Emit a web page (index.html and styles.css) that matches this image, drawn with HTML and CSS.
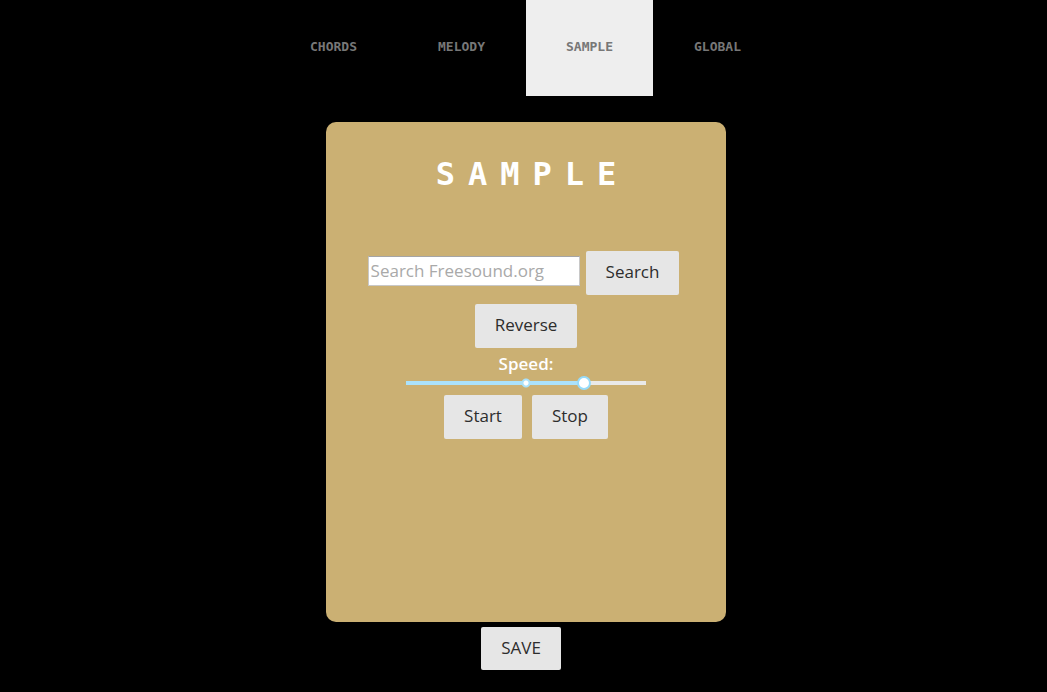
FILE: index.html
```html
<!DOCTYPE html>
<html lang="en">
<head>
<meta charset="utf-8">
<meta name="viewport" content="width=device-width, initial-scale=1">
<title>Sample</title>
<link rel="stylesheet" href="styles.css">
</head>
<body>
<nav class="tabs" aria-label="Sections">
  <a class="tab" href="#chords">CHORDS</a>
  <a class="tab" href="#melody">MELODY</a>
  <a class="tab tab-active" href="#sample" aria-current="page">SAMPLE</a>
  <a class="tab" href="#global">GLOBAL</a>
</nav>
<main class="page">
  <section class="panel" id="sample">
    <h1 class="title">SAMPLE</h1>
    <form class="row search">
      <input class="search-input" type="text" placeholder="Search Freesound.org" aria-label="Search Freesound.org">
      <button class="button" type="submit">Search</button>
    </form>
    <button class="button" type="button">Reverse</button>
    <label class="speed-label" for="speed">Speed:</label>
    <input class="speed" id="speed" type="range" min="0" max="1000" value="757">
    <div class="row transport">
      <button class="button" type="button">Start</button>
      <button class="button" type="button">Stop</button>
    </div>
  </section>
  <button class="button save" type="button">SAVE</button>
</main>
</body>
</html>
```
FILE: styles.css
```css
* {
  box-sizing: border-box;
}

body {
  margin: 0;
  background: #000;
  font-family: "Open Sans", "Noto Sans", sans-serif;
  font-size: 18px;
}

.tabs {
  display: flex;
  justify-content: center;
  gap: 1px;
  padding-left: 4px;
}

.tab {
  width: 127px;
  padding: 35px 0 37px;
  color: #777;
  font: bold 13px/24px "DejaVu Sans Mono", monospace;
  text-align: center;
  text-decoration: none;
}

.tab-active {
  background: #eee;
}

.page {
  display: flex;
  flex-direction: column;
  align-items: center;
  gap: 5px;
  padding: 26px 0 22px 5px;
}

.panel {
  display: flex;
  flex-direction: column;
  align-items: center;
  width: 100%;
  max-width: 400px;
  min-height: 500px;
  padding: 32px 40px;
  border-radius: 10px;
  background: #cbb073;
}

.title {
  margin: 0 0 57px;
  padding-left: 13px;
  color: #fff;
  font: bold 32px/40px "DejaVu Sans Mono", monospace;
  letter-spacing: 13px;
}

.row {
  display: flex;
  align-items: center;
}

.search {
  gap: 6px;
  margin: 0 5px 9px 0;
}

.search-input {
  width: 212px;
  height: 30px;
  margin-bottom: 4px;
  padding: 0 2px 2px;
  border: 1px solid #c8c8c8;
  border-top-color: #a5a5a5;
  border-radius: 0;
  background: #fff;
  font: 500 17px/24px "Open Sans", "Noto Sans", sans-serif;
}

.search-input::placeholder {
  color: #a9a9a9;
  opacity: 1;
}

.button {
  height: 44px;
  padding: 0 20px 2px;
  border: 0;
  border-radius: 2px;
  background: #e6e6e6;
  color: #2d2d2d;
  font: 17px/24px "Open Sans", "Noto Sans", sans-serif;
}

.speed-label {
  margin-top: 3px;
  color: #fff;
  font-size: 17px;
  font-weight: 600;
  line-height: 25px;
}

.speed {
  appearance: none;
  width: 240px;
  height: 14px;
  margin: 0 0 5px;
  background:
    radial-gradient(circle, #fff 2px, #abe2fb 3px, #abe2fb 4px, transparent 5px) center / 10px 10px no-repeat,
    linear-gradient(to right, #abe2fb 74%, #e9e9e9 74%) center / 100% 4px no-repeat;
}

.speed::-webkit-slider-thumb {
  appearance: none;
  width: 14px;
  height: 14px;
  border: 2px solid #96dbfa;
  border-radius: 50%;
  background: #fff;
}

.transport {
  gap: 10px;
}

.save {
  height: 43px;
  margin-right: 10px;
}
```
